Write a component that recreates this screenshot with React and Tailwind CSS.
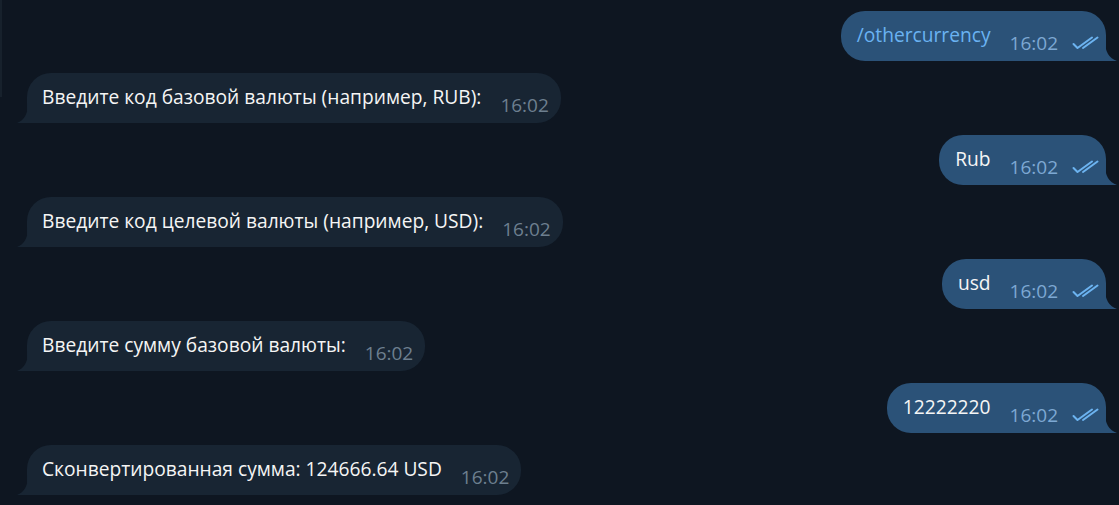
import React from "react";

// Telegram-style chat: one currency conversion dialog with the bot

const messages = [
  { out: true, text: "/othercurrency", command: true, time: "16:02" },
  { out: false, text: "Введите код базовой валюты (например, RUB):", time: "16:02" },
  { out: true, text: "Rub", time: "16:02" },
  { out: false, text: "Введите код целевой валюты (например, USD):", time: "16:02" },
  { out: true, text: "usd", time: "16:02" },
  { out: false, text: "Введите сумму базовой валюты:", time: "16:02" },
  { out: true, text: "12222220", time: "16:02" },
  { out: false, text: "Сконвертированная сумма: 124666.64 USD", time: "16:02" },
];

function DoubleCheck() {
  return (
    <svg width="27" height="14" viewBox="0 0 27 14" fill="none" className="shrink-0">
      <path d="M1.5 8 L5.5 12 L20 1.5" stroke="#6cb3f0" strokeWidth="2" strokeLinecap="round" strokeLinejoin="round" />
      <path d="M11 12 L25.5 1.5" stroke="#6cb3f0" strokeWidth="2" strokeLinecap="round" />
    </svg>
  );
}

function Tail({ out }) {
  // хвостик пузыря в нижнем углу
  if (out) {
    return (
      <svg width="12" height="20" viewBox="0 0 12 20" className="absolute bottom-0 -right-[11px]">
        <path d="M0 0 Q0 16 12 20 L0 20 Z" fill="#2b5278" />
      </svg>
    );
  }
  return (
    <svg width="11" height="20" viewBox="0 0 11 20" className="absolute bottom-0 -left-[10px]">
      <path d="M11 0 Q11 16 0 20 L11 20 Z" fill="#182533" />
    </svg>
  );
}

function Bubble({ m }) {
  return (
    <div
      className={
        m.out
          ? "relative flex items-end h-[50px] bg-[#2b5278] rounded-[24px] rounded-br-none pl-[16px] pr-[7px] pt-[12px] pb-[6px]"
          : "relative flex items-end h-[50px] bg-[#182533] rounded-[24px] rounded-bl-none pl-[15px] pr-[12px] pt-[12px] pb-[6px]"
      }
    >
      <Tail out={m.out} />
      <span
        className={
          m.command
            ? "mb-[8px] leading-[24px] text-[19.2px] text-[#6ab2f2] whitespace-nowrap"
            : "mb-[8px] leading-[24px] text-[19.2px] text-[#f5f5f5] whitespace-nowrap"
        }
      >
        {m.text}
      </span>
      <span
        className={
          m.out
            ? "ml-[19px] leading-[24px] text-[19px] text-[#7da8d3]"
            : "ml-[19px] leading-[24px] text-[19px] text-[#6d7f8f]"
        }
      >
        {m.time}
      </span>
      {m.out && (
        <span className="ml-[14px] mb-[5px] flex">
          <DoubleCheck />
        </span>
      )}
    </div>
  );
}

export default function App() {
  return (
    <div
      className="flex w-[1119px] h-[505px] bg-[#0e1621] overflow-hidden"
      style={{ fontFamily: '"Open Sans", "Noto Sans", sans-serif' }}
    >
      <div className="w-[2px] shrink-0">
        <div className="h-[97px] bg-[#17212c]" />
      </div>
      <div className="flex-1 flex flex-col gap-[12px] pt-[11px] pl-[25px] pr-[13px]">
        {messages.map((m, i) => (
          <div key={i} className={m.out ? "flex justify-end" : "flex justify-start"}>
            <Bubble m={m} />
          </div>
        ))}
      </div>
    </div>
  );
}
